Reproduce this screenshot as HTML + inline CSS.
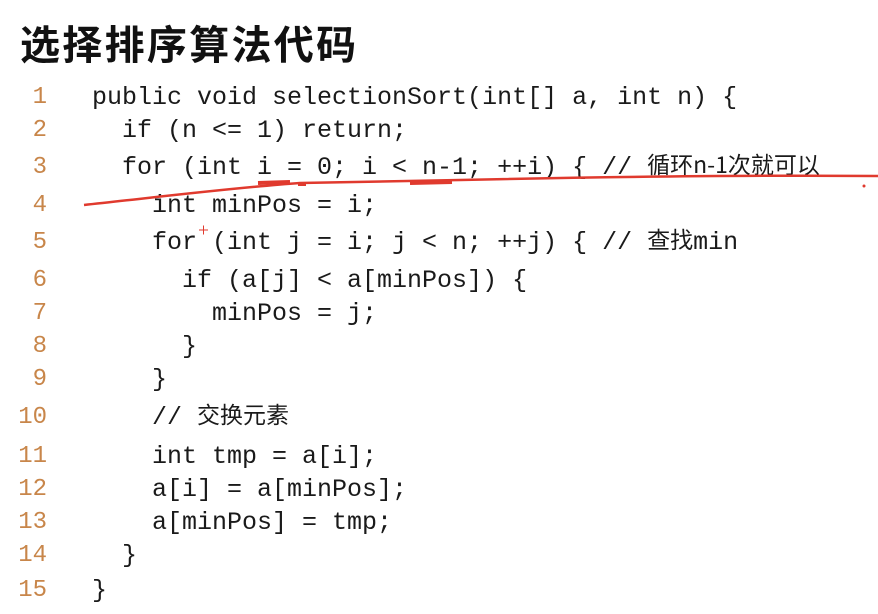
<!DOCTYPE html>
<html><head><meta charset="utf-8"><style>
body{margin:0;width:878px;height:614px;background:#fff;position:relative;overflow:hidden}
h1{position:absolute;left:20px;top:14px;margin:0;font:bold 40px "Noto Sans CJK SC",sans-serif;color:#111;letter-spacing:2.3px;line-height:56px}
.l{position:absolute;left:0;height:30px;line-height:30px;font:25px "Liberation Mono","Noto Sans CJK SC",monospace;color:#1a1a1a;white-space:pre}
.n{position:absolute;left:0;top:0;width:47px;text-align:right;color:#c8864a;font:24px/30px "Liberation Mono",monospace}
.c{position:absolute;left:92px;top:0;line-height:30px}
.cj{font-family:"Noto Sans CJK SC",sans-serif;font-size:23px;line-height:1;position:relative;top:-1px}
</style></head><body>
<h1>选择排序算法代码</h1>
<div class="l" style="top:83px"><span class="n">1</span><span class="c">public void selectionSort(int[] a, int n) {</span></div>
<div class="l" style="top:116px"><span class="n">2</span><span class="c">  if (n &lt;= 1) return;</span></div>
<div class="l" style="top:153px"><span class="n">3</span><span class="c">  for (int i = 0; i &lt; n-1; ++i) { // <span class="cj">循环n-1次就可以</span></span></div>
<div class="l" style="top:191px"><span class="n">4</span><span class="c">    int minPos = i;</span></div>
<div class="l" style="top:228px"><span class="n">5</span><span class="c">    for (int j = i; j &lt; n; ++j) { // <span class="cj">查找</span>min</span></div>
<div class="l" style="top:266px"><span class="n">6</span><span class="c">      if (a[j] &lt; a[minPos]) {</span></div>
<div class="l" style="top:299px"><span class="n">7</span><span class="c">        minPos = j;</span></div>
<div class="l" style="top:332px"><span class="n">8</span><span class="c">      }</span></div>
<div class="l" style="top:365px"><span class="n">9</span><span class="c">    }</span></div>
<div class="l" style="top:403px"><span class="n">10</span><span class="c">    // <span class="cj">交换元素</span></span></div>
<div class="l" style="top:442px"><span class="n">11</span><span class="c">    int tmp = a[i];</span></div>
<div class="l" style="top:475px"><span class="n">12</span><span class="c">    a[i] = a[minPos];</span></div>
<div class="l" style="top:508px"><span class="n">13</span><span class="c">    a[minPos] = tmp;</span></div>
<div class="l" style="top:541px"><span class="n">14</span><span class="c">  }</span></div>
<div class="l" style="top:576px"><span class="n">15</span><span class="c">}</span></div>
<svg width="878" height="614" style="position:absolute;left:0;top:0">
<path d="M84 205 C150 198 230 188 300 183 L460 180 C600 177 760 175 878 176" stroke="#e03a2e" stroke-width="2.5" fill="none"/>
<path d="M258 183 L290 182 M298 184 L306 184 M410 183 L452 182" stroke="#e03a2e" stroke-width="4" fill="none"/>
<circle cx="864" cy="186" r="1.5" fill="#e03a2e"/>
<path d="M199 230 H208 M203.5 225.5 V234.5" stroke="#e03a2e" stroke-width="1"/>
</svg>
</body></html>
